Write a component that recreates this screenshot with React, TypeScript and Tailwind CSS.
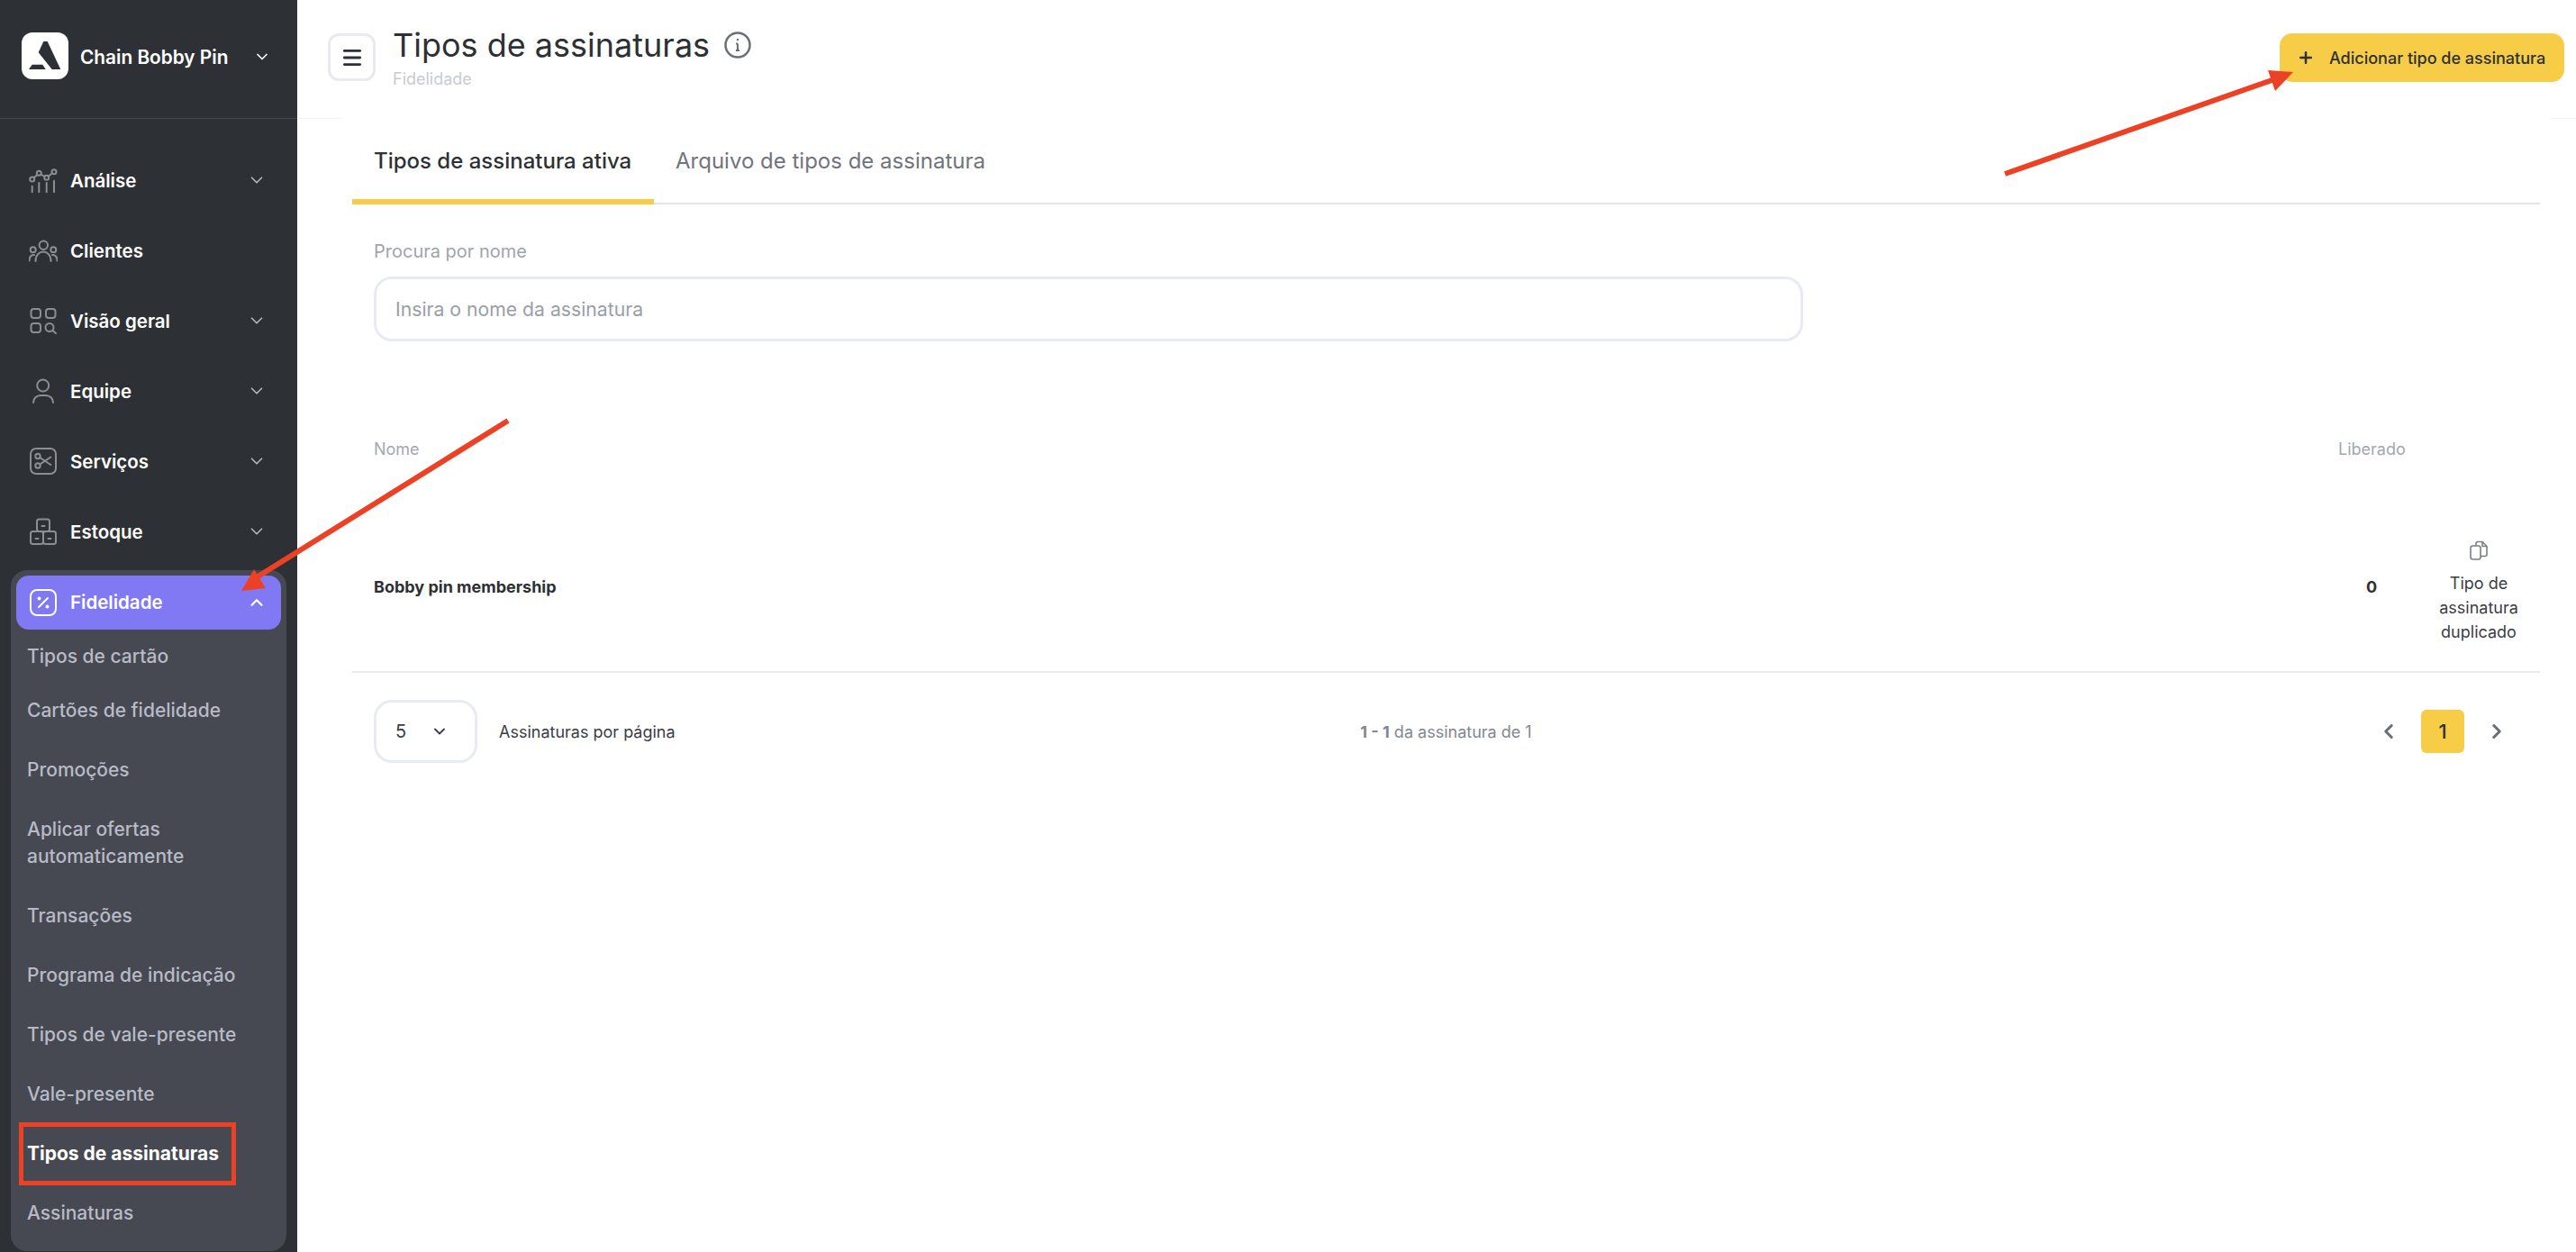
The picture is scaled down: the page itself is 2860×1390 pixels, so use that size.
import { ChevronDown, ChevronLeft, ChevronRight, ChevronUp, Menu, Plus } from "lucide-react";
import type { ReactNode } from "react";

const Icon = ({ children, className = "text-[#8b8e94]" }: { children: ReactNode; className?: string }) => (
   <svg width="32" height="32" viewBox="0 0 32 32" fill="none" stroke="currentColor" strokeWidth="2" strokeLinecap="round" strokeLinejoin="round" className={className}>
      {children}
   </svg>
);

const navItems: { label: string; arrow: boolean; icon: ReactNode }[] = [
   {
      label: "Análise",
      arrow: true,
      icon: (
         <>
            <circle cx="3.700" cy="15" r="2.500" /><circle cx="11.300" cy="8.300" r="2.500" /><circle cx="19.700" cy="13.300" r="2.500" /><circle cx="28" cy="6.700" r="2.500" />
            <path d="M5.600 13.300 9.400 10M13.500 9.600l4 2.400M21.700 11.700l4.300-3.400M3.700 29.300v-6.600M11.300 29.300V19M19.700 29.300V19M28 29.300V16.700" />
         </>
      ),
   },
   {
      label: "Clientes",
      arrow: false,
      icon: (
         <>
            <circle cx="16.300" cy="10.300" r="4.700" /><circle cx="4.700" cy="15.300" r="3" /><circle cx="27.300" cy="15.300" r="3" />
            <path d="M7.500 28c0-14 17-14 17 0M0.500 27.500c0-4 2-6.500 5.500-6.500M31.500 27.500c0-4-2-6.500-5.500-6.500" />
         </>
      ),
   },
   {
      label: "Visão geral",
      arrow: true,
      icon: (
         <>
            <rect x="2.500" y="3" width="10.500" height="10" rx="3" /><rect x="19" y="3" width="10.500" height="10" rx="3" /><rect x="2.500" y="19" width="10.500" height="10" rx="3" />
            <circle cx="23" cy="23.500" r="4.500" /><path d="m26.500 27 3.500 3" />
         </>
      ),
   },
   {
      label: "Equipe",
      arrow: true,
      icon: (
         <>
            <circle cx="15.700" cy="10" r="6.500" /><path d="M5 29c0-4.500 3.500-8 8-8h6c4.500 0 8 3.500 8 8" />
         </>
      ),
   },
   {
      label: "Serviços",
      arrow: true,
      icon: (
         <>
            <rect x="2" y="2" width="28" height="28" rx="6" />
            <circle cx="10" cy="10.500" r="2.700" /><circle cx="10" cy="21" r="2.700" /><path d="m12.300 12 12 8M12.300 19.500l12-8" />
         </>
      ),
   },
   {
      label: "Estoque",
      arrow: true,
      icon: (
         <>
            <rect x="9" y="2.500" width="14" height="13.500" rx="2.500" /><rect x="2" y="16" width="14" height="14" rx="2.500" /><rect x="16" y="16" width="14" height="14" rx="2.500" />
            <path d="M14.500 10h3M7.500 24h3M21.500 24h3" />
         </>
      ),
   },
];

const subItems: { label: string; className: string; active?: boolean }[] = [
   { label: "Tipos de cartão", className: "h-[58px]" },
   { label: "Cartões de fidelidade", className: "h-[62px] mb-[2px]" },
   { label: "Promoções", className: "h-[66px]" },
   { label: "Aplicar ofertas automaticamente", className: "h-[96px]" },
   { label: "Transações", className: "h-[66px]" },
   { label: "Programa de indicação", className: "h-[66px]" },
   { label: "Tipos de vale-presente", className: "h-[66px]" },
   { label: "Vale-presente", className: "h-[66px]" },
   { label: "Tipos de assinaturas", className: "h-[66px]", active: true },
   { label: "Assinaturas", className: "h-[66px]" },
];

const Sidebar = () => (
   <aside className="w-[330px] shrink-0 h-full bg-[#2d3135] text-white overflow-hidden">
      <div className="h-[132px] border-b border-[#44484d] pl-6 pr-[29px] flex items-center pb-[8px]">
         <div className="w-[52px] h-[52px] rounded-xl bg-white flex items-center justify-center">
            <svg width="52" height="52" viewBox="0 0 52 52" fill="#2d3135">
               <path d="M24.300 10h4.400L43.300 41H33.700L18.700 22.300Z" />
               <path d="M11.700 35.700H23.300L26.700 41H8Z" />
            </svg>
         </div>
         <span className="ml-[13px] mt-[4px] text-[20.800px] font-semibold flex-1">Chain Bobby Pin</span>
         <ChevronDown size={20} strokeWidth={2} className="text-white mt-[2px]" />
      </div>
      <nav className="pt-[29px]">
         {navItems.map((item) => (
            <div key={item.label} className="h-[78px] flex items-center pl-[32px] pr-[34px]">
               <Icon>{item.icon}</Icon>
               <span className="ml-[14px] mt-[2px] text-[20.500px] font-semibold flex-1">{item.label}</span>
               {item.arrow && <ChevronDown size={22} strokeWidth={1.8} className="text-[#b4b7bc]" />}
            </div>
         ))}
         <div className="mt-[4px] mx-3 bg-[#464952] rounded-[18px] p-[6px] pb-[10px]">
            <div className="h-[60px] rounded-[14px] bg-[#8079f3] flex items-center pl-[14px] pr-[16px]">
               <Icon className="text-white">
                  <rect x="2" y="2" width="28" height="28" rx="7" />
                  <path d="m11 21 10-10" />
                  <circle cx="11.500" cy="11.500" r="1" fill="currentColor" />
                  <circle cx="20.500" cy="20.500" r="1" fill="currentColor" />
               </Icon>
               <span className="ml-[14px] text-[20.500px] font-semibold flex-1">Fidelidade</span>
               <ChevronUp size={22} strokeWidth={2.4} className="text-white" />
            </div>
            {subItems.map((s) => (
               <div
                  key={s.label}
                  className={`flex items-center pl-3 pr-10 pt-[2px] leading-[30px] ${s.className} ${s.active ? "text-[21px] font-bold text-white" : "text-[21px] font-medium text-[#b8bbc6]"}`}
               >
                  {s.label}
               </div>
            ))}
         </div>
      </nav>
   </aside>
);

const Header = () => (
   <header className="h-[132px] border-b border-[#f3f4f6] flex items-start pt-[37px] pl-[34px] pr-[13px]">
      <button className="w-[53px] h-[53px] rounded-xl border-[3px] border-[#e8eaf0] flex items-center justify-center text-[#2d3135]">
         <Menu size={26} strokeWidth={2.6} />
      </button>
      <div className="ml-[19px] -mt-[9px] flex-1">
         <div className="flex items-center">
            <h1 className="text-[36px] leading-[44px] font-normal text-[#2d3135]">Tipos de assinaturas</h1>
            <svg width="32" height="32" viewBox="0 0 32 32" fill="none" stroke="#6b6f78" strokeWidth="2.500" className="ml-[15px]">
               <circle cx="16" cy="16" r="13.500" />
               <path d="M16 14.500V22M14 14.500h2M14 22h4" strokeWidth="2" />
               <circle cx="16" cy="10" r="1.200" fill="#6b6f78" stroke="none" />
            </svg>
         </div>
         <div className="mt-[2px] text-[18px] leading-[28px] text-[#c8cbd2]">Fidelidade</div>
      </div>
      <button className="w-[316px] h-[54px] rounded-[14px] bg-[#f7cc46] flex items-center pl-[19px] text-[18px] font-medium text-[#2d3135]">
         <Plus size={20} strokeWidth={3} />
         <span className="ml-[16px]">Adicionar tipo de assinatura</span>
      </button>
   </header>
);

const Content = () => (
   <section className="ml-[50px] mr-[30px] -mt-px px-[11px] pr-[10px] bg-white">
      <div className="flex items-end border-b-2 border-[#e2e4ea] pt-[32px]">
         <div className="w-[335px] pl-6 pb-[26px] border-b-[6px] border-[#f7cc46] -mb-[2px] text-[24px] leading-[32px] font-medium text-[#2d3135]">
            Tipos de assinatura ativa
         </div>
         <div className="px-6 pb-[26px] border-b-[6px] border-transparent -mb-[2px] text-[24px] leading-[32px] text-[#70747c]">
            Arquivo de tipos de assinatura
         </div>
      </div>

      <div className="ml-6 mt-[38px] text-[20px] leading-[28px] text-[#a0a4ad]">Procura por nome</div>
      <input
         readOnly
         placeholder="Insira o nome da assinatura"
         className="ml-6 mt-[14px] block w-[1587px] h-[72px] rounded-[20px] border-[3px] border-[#e8eaf4] pl-[21px] text-[21.200px] outline-none placeholder:text-[#9a9ea8]"
      />

      <div className="mt-[106px] flex text-[18px] leading-[28px] text-[#a3a7b0]">
         <div className="flex-1 pl-6">Nome</div>
         <div className="w-[74px] mr-[32px] text-center">Liberado</div>
         <div className="w-[100px] mr-[18px]" />
      </div>

      <div className="mt-[44px] h-[190px] border-b-2 border-[#e9ebf2] flex items-center text-[18px] text-[#2d3135]">
         <div className="flex-1 pl-6 font-bold">Bobby pin membership</div>
         <div className="w-[74px] mr-[32px] text-center font-bold">0</div>
         <div className="w-[100px] mr-[18px] mt-[12px] flex flex-col items-center text-center leading-[27px] text-[#3a3d45]">
            <svg width="22" height="22" viewBox="0 0 22 22" fill="none" stroke="#7b7e86" strokeWidth="1.600" strokeLinejoin="round" className="mb-[12px]">
               <rect x="2" y="6" width="11" height="15" rx="2.500" />
               <path d="M8 6V3.500C8 2.500 9 1.500 10 1.500h5l5 5v9c0 1.200-1 2-2 2h-5" />
               <path d="M15 1.500v5h5" />
            </svg>
            <span>Tipo de assinatura duplicado</span>
         </div>
      </div>

      <div className="mt-[30px] grid grid-cols-3 items-center text-[18px] text-[#3a3d45]">
         <div className="flex items-center pl-6">
            <div className="w-[115px] h-[70px] rounded-[20px] border-[3px] border-[#e8eaf4] flex items-center pl-[21px] text-[20px]">
               <span className="flex-1">5</span>
               <ChevronDown size={20} strokeWidth={2.2} className="mr-[29px]" />
            </div>
            <span className="ml-6">Assinaturas por página</span>
         </div>
         <div className="text-center text-[#83878f]">
            <span className="font-bold">1 - 1</span> da assinatura de 1
         </div>
         <div className="flex items-center justify-end gap-3 pr-6 text-[#6b6e73]">
            <button className="w-12 h-12 flex items-center justify-center"><ChevronLeft size={26} strokeWidth={2.8} /></button>
            <button className="w-12 h-12 rounded-md bg-[#f7cc46] text-[22px] font-medium text-[#2d3135]">1</button>
            <button className="w-12 h-12 flex items-center justify-center"><ChevronRight size={26} strokeWidth={2.8} /></button>
         </div>
      </div>
   </section>
);

// the red annotations sit on top of the page
const Annotations = () => (
   <>
      <svg className="absolute inset-0 pointer-events-none" width="2860" height="1390" viewBox="0 0 2860 1390" fill="#ec4124" stroke="none">
         <path d="M2226 193 2528 87" stroke="#ec4124" strokeWidth="6" />
         <polygon points="2546,80 2518,78 2526,101" />
         <path d="M564 467 280 644" stroke="#ec4124" strokeWidth="6" />
         <polygon points="268,656 282,632 295,653" />
      </svg>
      <div className="absolute left-[21px] top-[1246px] w-[241px] h-[70px] border-[5px] border-[#ec4124] pointer-events-none" />
   </>
);

export default function App() {
   return (
      <div className="relative w-full h-screen flex overflow-hidden bg-white font-['Inter',sans-serif]">
         <Sidebar />
         <main className="flex-1 min-w-0">
            <Header />
            <Content />
         </main>
         <Annotations />
      </div>
   );
}
